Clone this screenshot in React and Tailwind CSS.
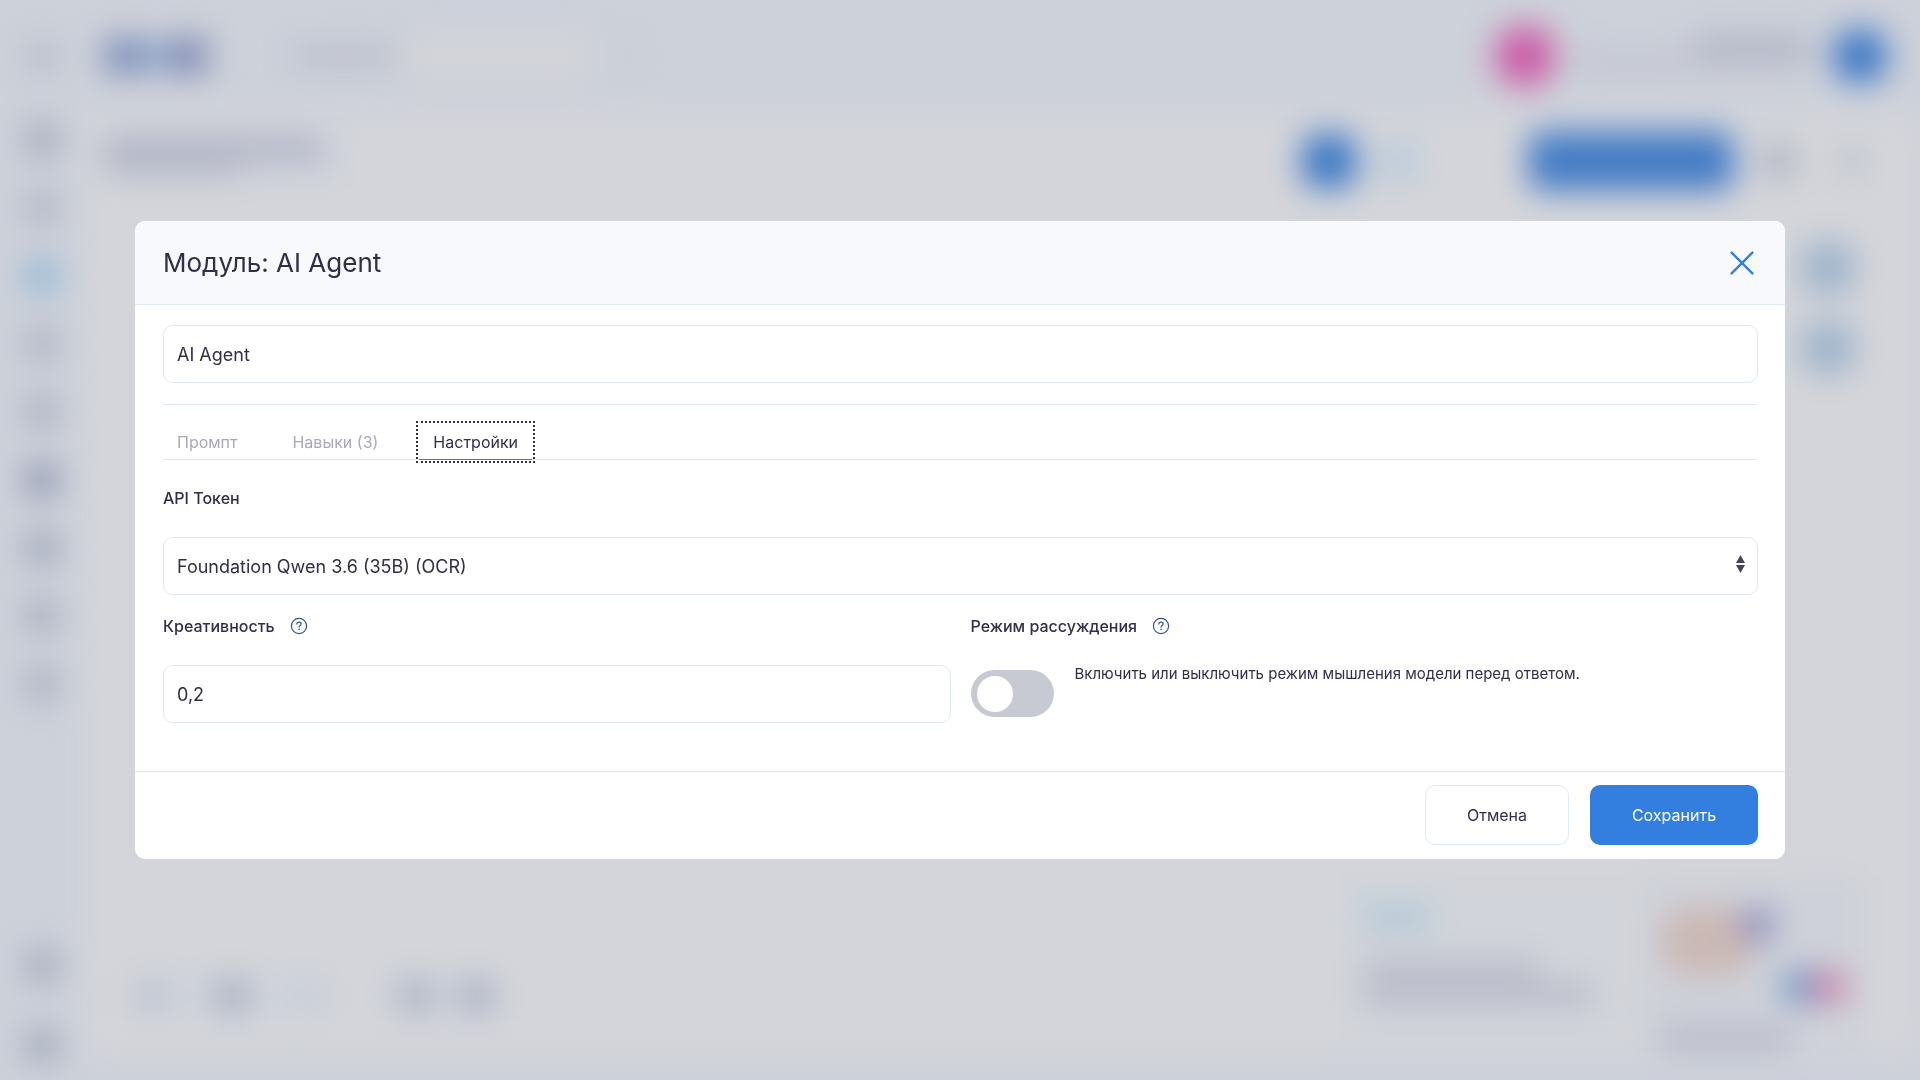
import { useState } from 'react';

const fieldClass =
  'block h-[58px] w-full rounded-[10px] border border-[#deebf7] bg-white px-[13px] text-[18px] text-[#312e4b] outline-none';

function HelpIcon() {
  return (
    <svg className="block size-[18px] text-[#2f5596]" viewBox="0 0 18 18" fill="none" stroke="currentColor" aria-hidden="true">
      <circle cx="9" cy="9" r="7.6" strokeWidth="1.2" />
      <path d="M6.9 7.1c0-1.2.9-1.9 2.1-1.9s2.1.7 2.1 1.8c0 1.5-2 1.5-2 3.1" strokeWidth="1.2" strokeLinecap="round" />
      <circle cx="9.1" cy="12.4" r=".8" fill="currentColor" stroke="none" />
    </svg>
  );
}

function SideIcon({ tone = 'bg-[#a4a8ba]' }) {
  return (
    <div className="flex h-[68px] items-center justify-center">
      <div className={`size-8 rounded-lg ${tone}`} />
    </div>
  );
}

function Workspace() {
  return (
    <div className="fixed inset-0 overflow-hidden bg-[#cdd1da]" aria-hidden="true">
      <div className="flex h-full blur-lg">
        <div className="flex w-[84px] shrink-0 flex-col">
          <div className="flex h-[106px] items-center justify-center">
            <div className="mt-2 size-7 rounded bg-[#b3bac6]" />
          </div>
          <SideIcon />
          <SideIcon tone="bg-[#b0b3c3]" />
          <SideIcon tone="bg-[#8db6d4]" />
          <SideIcon tone="bg-[#aeb2c2]" />
          <SideIcon tone="bg-[#abafc0]" />
          <SideIcon tone="bg-[#8d93ad]" />
          <SideIcon tone="bg-[#9ea4b8]" />
          <SideIcon tone="bg-[#a7acbd]" />
          <SideIcon tone="bg-[#a9aebe]" />
          <div className="mt-auto flex flex-col gap-3">
            <SideIcon />
            <SideIcon tone="bg-[#9fa5b7]" />
          </div>
        </div>

        <div className="flex min-w-0 flex-1 flex-col">
          <div className="flex h-[112px] shrink-0 items-center px-5">
            <div className="flex items-center">
              <div className="h-9 w-10 rounded-lg bg-[#7c8db8]" />
              <div className="h-7 w-6 bg-[#8fa9cb]" />
              <div className="h-9 w-10 rounded-lg bg-[#7f89b4]" />
            </div>
            <div className="ml-[84px] h-4 w-[104px] bg-[#b6b9c8]" />
            <div className="ml-2 h-11 w-[190px] rounded-lg bg-[#d3d4d9]" />
            <div className="ml-4 h-6 w-5 bg-[#c5ccd6]" />
            <div className="ml-auto size-[62px] rounded-full bg-[#ca5da7]" />
            <div className="ml-5 mt-3 h-4 w-[120px] bg-[#c0c2ce]" />
            <div className="mb-3 h-6 w-[112px] bg-[#aeb0c2]" />
            <div className="ml-6 mr-3 size-[56px] rounded-full bg-[#3d78c4]" />
          </div>

          <div className="flex min-h-0 flex-1 flex-col bg-[#d4d5da]">
            <div className="flex h-[98px] items-center pl-5 pr-[58px]">
              <div className="-mt-2 w-[240px] bg-[#cfd3dc] py-3">
                <div className="h-5 w-[218px] bg-[#aaadbf]" />
                <div className="mt-1 h-3 w-[136px] bg-[#b4b6c6]" />
              </div>
              <div className="ml-auto size-[54px] rounded-[14px] bg-[#3d78c4]" />
              <div className="ml-5 size-[44px] rounded-[14px] bg-[#bccdda]" />
              <div className="ml-[108px] h-[60px] w-[206px] rounded-[14px] bg-[#457dc5]" />
              <div className="ml-[28px] size-8 rounded bg-[#adb2c1]" />
              <div className="ml-[48px] h-8 w-5 rounded bg-[#b9bfcb]" />
            </div>

            <div className="flex min-h-0 flex-1 items-stretch">
              <div className="flex items-end gap-12 pb-[38px] pl-11">
                <div className="flex gap-12 rounded-xl bg-[#cfd3dc] p-2">
                  <div className="size-8 rounded bg-[#bec4d0]" />
                  <div className="size-8 rounded bg-[#a6adbf]" />
                  <div className="size-7 rounded bg-[#c8cdd7]" />
                </div>
                <div className="flex gap-7 rounded-xl bg-[#cfd3dc] p-2 pl-5">
                  <div className="size-8 rounded bg-[#abb2c2]" />
                  <div className="size-8 rounded bg-[#a9afc1]" />
                </div>
              </div>
              <div className="ml-auto flex flex-col justify-between">
                <div className="mr-[66px] mt-8 flex flex-col gap-7 self-end">
                  <div className="size-[52px] rounded-xl bg-[#9fb4cb]" />
                  <div className="size-[52px] rounded-xl bg-[#9fb4cb]" />
                </div>
                <div className="mb-2 mr-14 flex gap-4">
                  <div className="h-[175px] w-[284px] bg-[#d1d4da] px-6 py-8">
                    <div className="h-5 w-[66px] bg-[#abc6d8]" />
                    <div className="mt-8 h-5 w-[176px] bg-[#b9bcc9]" />
                    <div className="mt-1 h-6 w-[230px] bg-[#b9bcc9]" />
                  </div>
                  <div className="h-[175px] w-[224px] bg-[#ced1d9] pl-5">
                    <div className="flex">
                      <div className="mt-8 h-[68px] w-[96px] rounded-full bg-[#cbb8b4]" />
                      <div className="-ml-4 mt-8 size-9 rounded-full bg-[#8f91bf]" />
                    </div>
                    <div className="-mt-1 ml-[120px] flex">
                      <div className="h-8 w-8 rounded-l-full bg-[#7398c6]" />
                      <div className="h-8 w-9 rounded-r-full bg-[#c985ab]" />
                    </div>
                    <div className="mt-6 h-6 w-[130px] bg-[#b7bac8]" />
                  </div>
                </div>
              </div>
            </div>
          </div>
          <div className="h-[22px] shrink-0" />
        </div>
      </div>
    </div>
  );
}

function Tab({ selected, onClick, children }) {
  return (
    <button
      type="button"
      role="tab"
      aria-selected={selected}
      onClick={onClick}
      className={`-mb-px h-9 border-b px-[14px] text-[16px] ${
        selected
          ? 'border-[#327fdf] text-[#312e4b] outline-2 outline-offset-1 outline-dotted outline-[#312e4b]'
          : 'border-transparent text-[#a9a8ba]'
      }`}
    >
      {children}
    </button>
  );
}

export default function App() {
  const [tab, setTab] = useState('settings');
  const [name, setName] = useState('AI Agent');
  const [creativity, setCreativity] = useState('0,2');
  const [reasoning, setReasoning] = useState(false);

  return (
    <div className="min-h-screen font-[Inter,sans-serif] text-[#312e4b]">
      <Workspace />
      <div className="relative flex min-h-screen items-center px-[135px]">
        <section
          role="dialog"
          aria-modal="true"
          aria-labelledby="dialog-title"
          className="w-full overflow-hidden rounded-[10px] bg-white"
        >
          <header className="flex h-[84px] items-center justify-between border-b border-[#deebf7] bg-[#f8f9fd] pl-7 pr-[27px]">
            <h1 id="dialog-title" className="text-[26px]">Модуль: AI Agent</h1>
            <button type="button" aria-label="Закрыть" className="p-1">
              <svg className="size-6 text-[#327fdf]" viewBox="0 0 24 24" stroke="currentColor" strokeWidth="2.4" strokeLinecap="round" aria-hidden="true">
                <path d="M1.6 1.6 22.4 22.4M22.4 1.6 1.6 22.4" />
              </svg>
            </button>
          </header>

          <div className="pb-12 pl-7 pr-[27px] pt-5">
            <input
              type="text"
              aria-label="Название модуля"
              value={name}
              onChange={(e) => setName(e.target.value)}
              className={fieldClass}
            />

            <div role="tablist" className="mt-[21px] flex items-end gap-[27px] border-y border-[#deebf7] pt-[19px]">
              <Tab selected={tab === 'prompt'} onClick={() => setTab('prompt')}>Промпт</Tab>
              <Tab selected={tab === 'skills'} onClick={() => setTab('skills')}>Навыки (3)</Tab>
              <Tab selected={tab === 'settings'} onClick={() => setTab('settings')}>Настройки</Tab>
            </div>

            <label htmlFor="token" className="mt-[26px] block text-[16px] leading-6 font-medium">API Токен</label>
            <div className="relative mt-[27px]">
              <select id="token" className={`${fieldClass} appearance-none`}>
                <option>Foundation Qwen 3.6 (35B) (OCR)</option>
              </select>
              <svg className="pointer-events-none absolute right-[13px] top-[18px] h-[18px] w-[9px] fill-[#45425f]" viewBox="0 0 9 18" aria-hidden="true">
                <path d="M4.5 0 9 8H0zM4.5 18 0 10h9z" />
              </svg>
            </div>

            <div className="mt-[19px] grid grid-cols-2 gap-5">
              <div>
                <div className="flex items-center gap-[15px]">
                  <label htmlFor="creativity" className="text-[16px] leading-6 font-medium">Креативность</label>
                  <button type="button" aria-label="Справка: Креативность"><HelpIcon /></button>
                </div>
                <input
                  id="creativity"
                  type="text"
                  inputMode="decimal"
                  value={creativity}
                  onChange={(e) => setCreativity(e.target.value)}
                  className={`${fieldClass} mt-[27px]`}
                />
              </div>
              <div>
                <div className="flex items-center gap-[15px]">
                  <label htmlFor="reasoning" className="text-[16px] leading-6 font-medium">Режим рассуждения</label>
                  <button type="button" aria-label="Справка: Режим рассуждения"><HelpIcon /></button>
                </div>
                <div className="mt-8 flex items-start gap-[21px]">
                  <input
                    id="reasoning"
                    type="checkbox"
                    role="switch"
                    aria-describedby="reasoning-hint"
                    checked={reasoning}
                    onChange={(e) => setReasoning(e.target.checked)}
                    className="flex h-[47px] w-[83px] shrink-0 appearance-none items-center rounded-full bg-[#c8cad3] px-[6px] before:size-9 before:rounded-full before:bg-white checked:justify-end checked:bg-[#327fdf]"
                  />
                  <p id="reasoning-hint" className="-mt-2 text-[15px] leading-6">
                    Включить или выключить режим мышления модели перед ответом.
                  </p>
                </div>
              </div>
            </div>
          </div>

          <footer className="flex justify-end gap-[21px] border-t border-[#deebf7] px-[27px] pb-[14px] pt-[13px]">
            <button type="button" className="h-[60px] w-36 rounded-[10px] border border-[#deebf7] bg-white text-[16px]">
              Отмена
            </button>
            <button type="button" className="h-[60px] w-[168px] rounded-[10px] bg-[#327fdf] text-[16px] text-white">
              Сохранить
            </button>
          </footer>
        </section>
      </div>
    </div>
  );
}
